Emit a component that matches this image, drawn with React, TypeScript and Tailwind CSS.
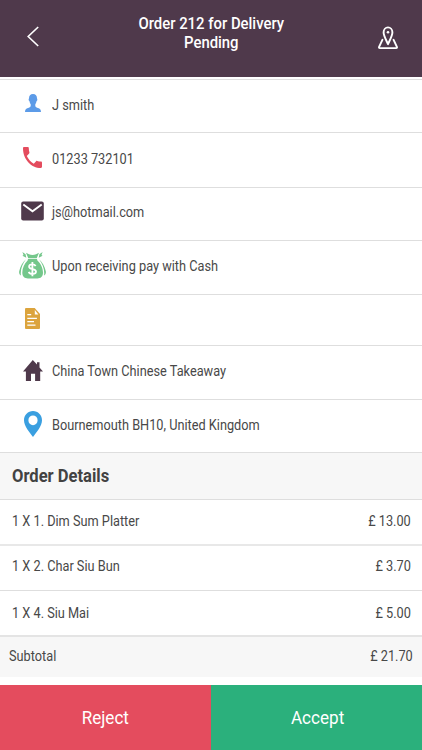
import type { ReactNode } from "react";

interface InfoRow {
  id: string;
  text: string;
  row: string;
  icon: ReactNode;
}

interface OrderLine {
  name: string;
  price: string;
  row: string;
}

function BackIcon() {
  return (
    <svg className="mb-1 block h-[21px] w-3" viewBox="0 0 12 21" fill="none" stroke="#fff" strokeWidth="1.6">
      <path d="M11.2 1 1.2 10.500l10 9.500" />
    </svg>
  );
}

function MapIcon() {
  return (
    <svg className="mb-0.5 block h-6 w-5" viewBox="0 0 20 24" fill="none" stroke="#fff" strokeWidth="1.9" strokeLinejoin="round" strokeLinecap="round">
      <path d="M10 18.2C8.6 14.6 5.600 10.2 5.600 6.300a4.400 4.900 0 0 1 8.800 0c0 3.900-3 8.300-4.400 11.900z" />
      <circle cx="10" cy="6.200" r="1.300" fill="#fff" stroke="none" />
      <path d="M4.400 13.800 1.100 20.800c-.3.800 0 1.300.8 1.300h16.200c.8 0 1.100-.5.800-1.300l-3.300-7" />
    </svg>
  );
}

function PersonIcon() {
  return (
    <svg className="block h-[18px] w-4" viewBox="0 0 16 18" fill="#5c9be8">
      <path d="M8 0c2.700 0 4 1.700 4 4.200 0 .5.500.7.300 1.700-.1.700-.6.900-.8 1.300-.2 1.500-.8 2.300-1.200 3v1.700c.3 1.300 1.400 1.600 2.700 2 1.900.6 3 1.500 3 4.100H0c0-2.600 1.100-3.500 3-4.100 1.300-.4 2.400-.7 2.700-2v-1.700c-.4-.7-1-1.500-1.200-3-.2-.4-.7-.6-.8-1.300-.2-1 .3-1.200.3-1.700C4 1.700 5.300 0 8 0z" />
    </svg>
  );
}

function PhoneIcon() {
  return (
    <svg className="block h-[21px] w-[19px]" viewBox="3 3 18 18" preserveAspectRatio="none" fill="#e44c5e">
      <path d="M20 15.500c-1.250 0-2.450-.2-3.570-.57-.35-.11-.74-.03-1.020.24l-2.200 2.200c-2.830-1.440-5.150-3.750-6.590-6.590l2.200-2.210c.28-.26.36-.65.25-1C8.700 6.450 8.500 5.250 8.500 4c0-.55-.45-1-1-1H4c-.55 0-1 .45-1 1 0 9.390 7.610 17 17 17 .55 0 1-.45 1-1v-3.500c0-.55-.45-1-1-1z" />
    </svg>
  );
}

function MailIcon() {
  return (
    <svg className="block h-5 w-[23px]" viewBox="0 0 23 20" fill="none">
      <rect x="0.200" y="0.500" width="22.600" height="19" rx="2" fill="#4f394b" />
      <path d="M2.300 3.400 11.500 10.300l9.200-6.900" stroke="#fff" strokeWidth="1.900" />
    </svg>
  );
}

function MoneyBagIcon() {
  return (
    <svg className="block h-7 w-[27px]" viewBox="0 0 27 28" fill="#74c78b">
      <path d="M7 1.800 10 3.200c2.300.9 4.700.9 7 0l3-1.400-2.300 5.400H9.300z" />
      <path d="M9 8.100h9l.4 1.400c3.400 3 5.600 7.600 5.600 12.300 0 3.900-2.400 5.700-5.600 5.700H8.900c-3.200 0-5.600-1.800-5.600-5.700 0-4.700 2.200-9.300 5.300-12.300z" />
      <path d="M7.300 6.700 3.400 4.800 4.500 4 3.400 1l3.200 2.200zM19.700 6.700l3.900-1.900-1.100-.8 1.100-3-3.200 2.200z" />
      <path d="M7 8.200C3.500 11 1.300 15.600.2 20.300c-.4 2 .4 3.400 1.700 4.200-.7-5.700 1.300-11.400 5.100-16.300zM20 8.200c3.500 2.800 5.700 7.400 6.800 12.100.4 2-.4 3.400-1.700 4.200.7-5.700-1.300-11.400-5.100-16.300z" />
      <path d="M16.600 15.200c-.5-1.200-1.600-1.800-3.200-1.800-1.900 0-3.300.8-3.300 2.300 0 3.300 6.900 1.500 6.900 4.900 0 1.600-1.500 2.400-3.500 2.400-1.900 0-3.200-.7-3.800-2.100M13.400 10.900v14.400" fill="none" stroke="#fff" strokeWidth="1.800" />
    </svg>
  );
}

function NoteIcon() {
  return (
    <svg className="block h-[21px] w-[15px]" viewBox="0 0 15 21" fill="#dca43d">
      <path d="M1.300 0h8.400L15 6v13.700c0 .8-.5 1.300-1.300 1.300H1.300C.5 21 0 20.500 0 19.700V1.300C0 .5.500 0 1.300 0z" />
      <path d="M9.800 2v4.400h3.600z" fill="#fff" />
      <path d="M2.300 6.600h3.900M2.300 10.300h9.600M2.300 13.700h6.700M2.300 17.200h8.200" stroke="#fff" strokeWidth="1.200" />
    </svg>
  );
}

function HomeIcon() {
  return (
    <svg className="block h-[21px] w-5" viewBox="0 0 20 21" fill="#4f394b">
      <path d="M9.800 0 14 4.600V2.200h2.500v5.200L20 11.400h-2.800V21h-5.100v-7.200H8V21H2.900v-9.600H0z" />
    </svg>
  );
}

function PinIcon() {
  return (
    <svg className="block h-[26px] w-[18px]" viewBox="0 0 18 26" fill="#3a9fe0">
      <path fillRule="evenodd" d="M9 0c5 0 9 4 9 9.200C18 15.600 12.300 21 9 26 5.700 21 0 15.600 0 9.200 0 4 4 0 9 0zm0 4.400a4.600 4.900 0 1 0 0 9.800 4.600 4.900 0 0 0 0-9.800z" />
    </svg>
  );
}

const INFO_ROWS: InfoRow[] = [
  { id: "name", text: "J smith", row: "h-[53px] pb-[3px]", icon: <div className="mb-[3px]"><PersonIcon /></div> },
  { id: "phone", text: "01233 732101", row: "h-[55px] pb-[3px]", icon: <div className="mb-[3px]"><PhoneIcon /></div> },
  { id: "email", text: "js@hotmail.com", row: "h-[53px] pb-[5px]", icon: <div className="mb-[2px]"><MailIcon /></div> },
  { id: "payment", text: "Upon receiving pay with Cash", row: "h-[54px] pb-[4px]", icon: <div className="mb-px"><MoneyBagIcon /></div> },
  { id: "note", text: "", row: "h-[51px] pb-[3px]", icon: <NoteIcon /> },
  { id: "shop", text: "China Town Chinese Takeaway", row: "h-[54px] pb-[3px]", icon: <div className="mb-[2px]"><HomeIcon /></div> },
  { id: "address", text: "Bournemouth BH10, United Kingdom", row: "h-[53px] pb-[3px]", icon: <div className="mb-[2px]"><PinIcon /></div> },
];

const ORDER_LINES: OrderLine[] = [
  { name: "1 X 1. Dim Sum Platter", price: "£ 13.00", row: "h-[46px] pb-[3px] border-b-2 border-[#e8e8e8]" },
  { name: "1 X 2. Char Siu Bun", price: "£ 3.70", row: "h-[45px] pb-[4px] border-b border-[#dedede]" },
  { name: "1 X 4. Siu Mai", price: "£ 5.00", row: "h-[46px] pb-px border-b-2 border-[#e4e4e4]" },
];

export default function App() {
  return (
    <div className="flex h-[750px] w-[422px] flex-col overflow-hidden bg-white font-['Roboto',sans-serif] text-sm text-[#484848]">
      {/* Header */}
      <header className="flex h-[77px] shrink-0 items-center justify-between bg-[#4f394b] pr-6 pl-[27px] text-white">
        <BackIcon />
        <h1 className="-mt-[11px] ml-[5px] scale-x-[.93] text-center text-[16px] leading-[19px] font-medium whitespace-nowrap">
          Order 212 for Delivery
          <br />
          Pending
        </h1>
        <MapIcon />
      </header>
      <div className="h-[3px] shrink-0 border-b border-[#dedede]" />

      {/* Customer info */}
      {INFO_ROWS.map((row) => (
        <div key={row.id} className={`flex shrink-0 items-center border-b border-[#dedede] ${row.row}`}>
          <div className="ml-[13px] flex w-[39px] justify-center">{row.icon}</div>
          <span className="origin-left scale-x-[.91] whitespace-nowrap">{row.text}</span>
        </div>
      ))}

      {/* Order */}
      <h2 className="flex h-[47px] shrink-0 items-center border-b border-[#dedede] bg-[#f7f7f7] px-3 text-[18px] font-bold text-[#424242]">
        <span className="origin-left scale-x-[.92]">Order Details</span>
      </h2>
      {ORDER_LINES.map((line) => (
        <div key={line.name} className={`flex shrink-0 items-center justify-between pr-[11.5px] pl-3 ${line.row}`}>
          <span className="origin-left scale-x-[.91]">{line.name}</span>
          <span className="origin-right scale-x-[.91]">{line.price}</span>
        </div>
      ))}
      <div className="flex h-10 shrink-0 items-center justify-between bg-[#f7f7f7] px-[9px] pb-0.5">
        <span className="origin-left scale-x-[.91]">Subtotal</span>
        <span className="origin-right scale-x-[.91]">{"£ 21.70"}</span>
      </div>

      {/* Actions */}
      <div className="mt-auto flex h-[65px] shrink-0 text-[19px] text-white">
        <button className="w-[211px] bg-[#e44c5e]">
          <span className="inline-block scale-x-[.9]">Reject</span>
        </button>
        <button className="w-[211px] bg-[#2bb07c] pl-0.5">
          <span className="inline-block scale-x-[.9]">Accept</span>
        </button>
      </div>
    </div>
  );
}
